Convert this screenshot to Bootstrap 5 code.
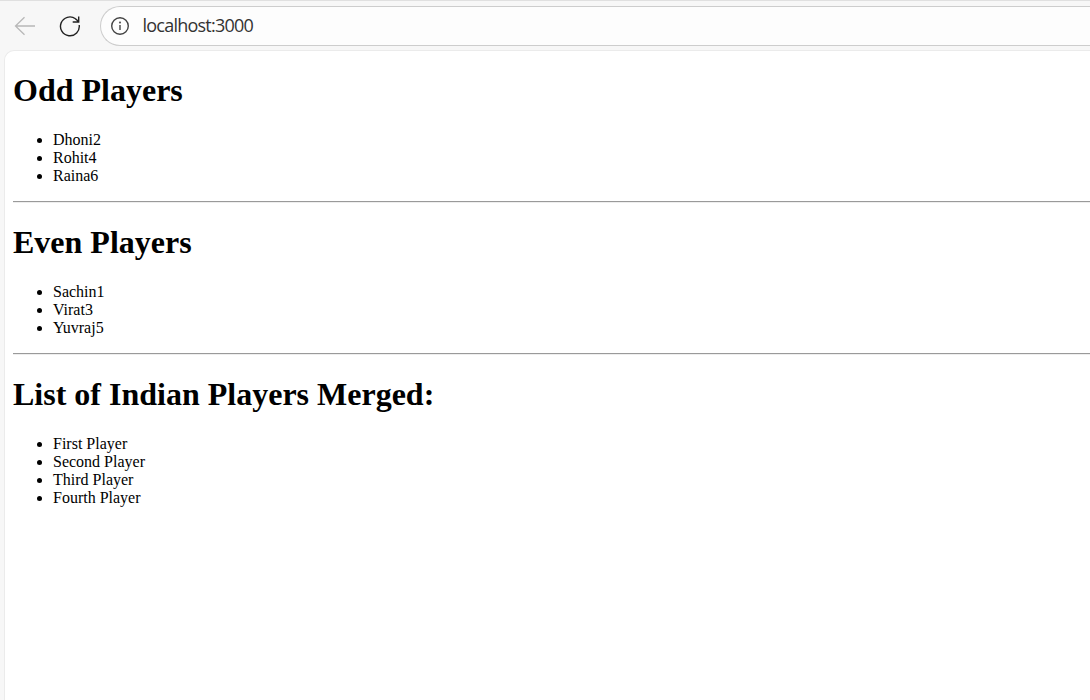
<!DOCTYPE html>
<html lang="en">
<head>
<meta charset="utf-8">
<meta name="viewport" content="width=device-width, initial-scale=1">
<title>Players</title>
<link href="https://cdn.jsdelivr.net/npm/bootstrap@5.3.0/dist/css/bootstrap.min.css" rel="stylesheet">
<style>
body{background:#f7f7f7;height:100vh}
.toolbar{height:50px;border-top:1px solid #e0e0e0}
.tool-icon{width:22px;height:22px}
.back-btn{margin-left:14px}
.reload-btn{margin-left:23px}
.address{height:40px;margin:0 0 0 19px;border:1px solid #cdcdcd;border-right:0;border-radius:20px 0 0 20px;background:#fdfdfd;padding-left:9px;font:18px/1 "Open Sans","Noto Sans",sans-serif;color:#333}
.address-text{margin-left:12.5px;padding-bottom:2px;letter-spacing:-.77px}
.page{margin-left:4px;border:1px solid #ebebeb;border-width:1px 0 0 1px;border-radius:10px 0 0 0;padding-left:8px;font:16px/18px "Liberation Serif",serif;color:#000}
.page h1{font:bold 32px/36px "Liberation Serif",serif;margin:21px 0 23px}
.page ul{margin:0 0 16px;padding-left:40px}
.page hr{margin:0;border:0;border-top:1px solid #9a9a9a;border-bottom:1px solid #eee;opacity:1;height:2px}
</style>
</head>
<body class="d-flex flex-column overflow-hidden">
<header class="toolbar d-flex align-items-center flex-shrink-0">
<svg class="tool-icon back-btn" viewBox="0 0 22 22" fill="none" stroke="#b8b8b8" stroke-width="1.3"><path d="M21 11H1.500M10.500 2.300 1.500 11l9 8.700"/></svg>
<svg class="tool-icon reload-btn" viewBox="0 0 22 22" fill="none" stroke="#222" stroke-width="1.4"><path d="M20.200 10a9.400 9.400 0 1 1-3.700-6.200Q18.300 5 19.600 7M19.700 1.500V7h-6"/></svg>
<div class="address d-flex align-items-center flex-grow-1">
<svg width="20" height="20" viewBox="0 0 20 20" fill="none" stroke="#444" stroke-width="1.4"><circle cx="10" cy="10" r="8.300"/><path d="M10 9v5"/><circle cx="10" cy="6.500" r=".4"/></svg>
<span class="address-text">localhost:3000</span>
</div>
</header>
<main class="page bg-white flex-grow-1">
<h1>Odd Players</h1>
<ul><li>Dhoni2</li><li>Rohit4</li><li>Raina6</li></ul>
<hr>
<h1>Even Players</h1>
<ul><li>Sachin1</li><li>Virat3</li><li>Yuvraj5</li></ul>
<hr>
<h1>List of Indian Players Merged:</h1>
<ul><li>First Player</li><li>Second Player</li><li>Third Player</li><li>Fourth Player</li></ul>
</main>
<script src="https://cdn.jsdelivr.net/npm/bootstrap@5.3.0/dist/js/bootstrap.bundle.min.js"></script>
</body>
</html>
